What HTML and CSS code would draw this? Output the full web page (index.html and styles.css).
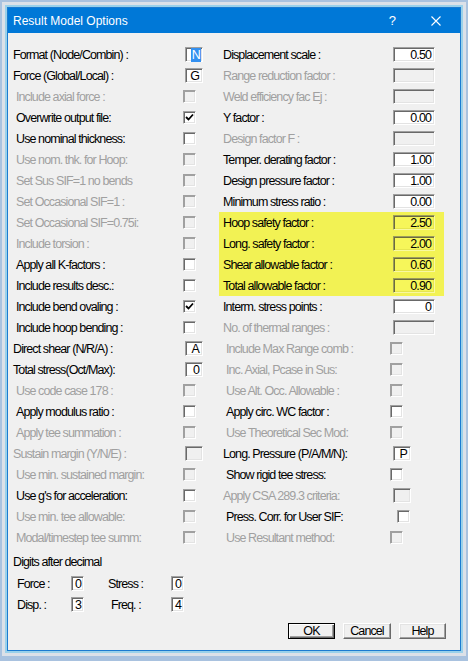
FILE: index.html
```html
<!DOCTYPE html>
<html lang="en">
<head>
    <meta charset="UTF-8">
    <meta name="viewport" content="width=device-width, initial-scale=1.0">
    <title>Result Model Options</title>
    <link rel="stylesheet" href="styles.css">
</head>
<body>
<div class="frame"><div class="frame2"><div class="frame3">
<div class="window">
    <div class="titlebar">
        <span class="title">Result Model Options</span>
        <span class="qmark">?</span>
        <svg class="close" width="10" height="10" viewBox="0 0 10 10"><path d="M0.5 0.5 L9.5 9.5 M9.5 0.5 L0.5 9.5" stroke="#fff" stroke-width="1.1" fill="none"/></svg>
    </div>

    <div class="client">
        <div class="cols">
            <!-- left column -->
            <div class="col left">
                <div class="row"><span class="lab">Format (Node/Combin) :</span><span class="tb ch"><span class="sel">N</span></span></div>
                <div class="row"><span class="lab">Force (Global/Local) :</span><span class="tb ch">G</span></div>
                <div class="row"><span class="lab i off">Include axial force :</span><span class="cb off"></span></div>
                <div class="row"><span class="lab i">Overwrite output file:</span><span class="cb"><svg width="9" height="9" viewBox="0 0 9 9"><path d="M1 4 L3.5 6.5 L8 1.5" stroke="#000" stroke-width="1.8" fill="none"/></svg></span></div>
                <div class="row"><span class="lab i">Use nominal thickness:</span><span class="cb"></span></div>
                <div class="row"><span class="lab i off">Use nom. thk. for Hoop:</span><span class="cb off"></span></div>
                <div class="row"><span class="lab i off">Set Sus SIF=1 no bends</span><span class="cb off"></span></div>
                <div class="row"><span class="lab i off">Set Occasional SIF=1 :</span><span class="cb off"></span></div>
                <div class="row"><span class="lab i off">Set Occasional SIF=0.75i:</span><span class="cb off"></span></div>
                <div class="row"><span class="lab i off">Include torsion :</span><span class="cb off"></span></div>
                <div class="row"><span class="lab i">Apply all K-factors :</span><span class="cb"></span></div>
                <div class="row"><span class="lab i">Include results desc.:</span><span class="cb"></span></div>
                <div class="row"><span class="lab i">Include bend ovaling :</span><span class="cb"><svg width="9" height="9" viewBox="0 0 9 9"><path d="M1 4 L3.5 6.5 L8 1.5" stroke="#000" stroke-width="1.8" fill="none"/></svg></span></div>
                <div class="row"><span class="lab i">Include hoop bending :</span><span class="cb"></span></div>
                <div class="row"><span class="lab">Direct shear (N/R/A) :</span><span class="tb ch">A</span></div>
                <div class="row"><span class="lab">Total stress(Oct/Max):</span><span class="tb ch">0</span></div>
                <div class="row"><span class="lab i off">Use code case 178 :</span><span class="cb off"></span></div>
                <div class="row"><span class="lab i">Apply modulus ratio :</span><span class="cb"></span></div>
                <div class="row"><span class="lab i off">Apply tee summation :</span><span class="cb off"></span></div>
                <div class="row"><span class="lab off">Sustain margin (Y/N/E) :</span><span class="tb ch off"></span></div>
                <div class="row"><span class="lab i off">Use min. sustained margin:</span><span class="cb off"></span></div>
                <div class="row"><span class="lab i">Use g's for acceleration:</span><span class="cb"></span></div>
                <div class="row"><span class="lab i off">Use min. tee allowable:</span><span class="cb off"></span></div>
                <div class="row"><span class="lab i off">Modal/timestep tee summ:</span><span class="cb off"></span></div>
            </div>

            <!-- right column -->
            <div class="col right">
                <div class="row"><span class="lab">Displacement scale :</span><span class="tb num">0.50</span></div>
                <div class="row"><span class="lab off">Range reduction factor :</span><span class="tb num off"></span></div>
                <div class="row"><span class="lab off">Weld efficiency fac Ej :</span><span class="tb num off"></span></div>
                <div class="row"><span class="lab">Y factor :</span><span class="tb num">0.00</span></div>
                <div class="row"><span class="lab off">Design factor F :</span><span class="tb num off"></span></div>
                <div class="row"><span class="lab">Temper. derating factor :</span><span class="tb num">1.00</span></div>
                <div class="row"><span class="lab">Design pressure factor :</span><span class="tb num">1.00</span></div>
                <div class="row"><span class="lab">Minimum stress ratio :</span><span class="tb num">0.00</span></div>
                <div class="hl">
                    <div class="row"><span class="lab">Hoop safety factor :</span><span class="tb num yel">2.50</span></div>
                    <div class="row"><span class="lab">Long. safety factor :</span><span class="tb num yel">2.00</span></div>
                    <div class="row"><span class="lab">Shear allowable factor :</span><span class="tb num yel">0.60</span></div>
                    <div class="row"><span class="lab">Total allowable factor :</span><span class="tb num yel">0.90</span></div>
                </div>
                <div class="row"><span class="lab">Interm. stress points :</span><span class="tb num">0</span></div>
                <div class="row"><span class="lab off">No. of thermal ranges :</span><span class="tb num off"></span></div>
                <div class="row"><span class="lab i off">Include Max Range comb :</span><span class="cb off"></span></div>
                <div class="row"><span class="lab i off">Inc. Axial, Pcase in Sus:</span><span class="cb off"></span></div>
                <div class="row"><span class="lab i off">Use Alt. Occ. Allowable :</span><span class="cb off"></span></div>
                <div class="row"><span class="lab i">Apply circ. WC factor :</span><span class="cb"></span></div>
                <div class="row"><span class="lab i off">Use Theoretical Sec Mod:</span><span class="cb off"></span></div>
                <div class="row"><span class="lab">Long. Pressure (P/A/M/N):</span><span class="tb ch2">P</span></div>
                <div class="row"><span class="lab i">Show rigid tee stress:</span><span class="cb"></span></div>
                <div class="row"><span class="lab off">Apply CSA 289.3 criteria:</span><span class="tb ch2 off"></span></div>
                <div class="row"><span class="lab i">Press. Corr. for User SIF:</span><span class="cb far"></span></div>
                <div class="row"><span class="lab i off">Use Resultant method:</span><span class="cb off"></span></div>
            </div>
        </div>

        <div class="digits">
            <div class="dhead">Digits after decimal</div>
            <div class="drow">
                <span class="dlab">Force :</span><span class="tb dg">0</span>
                <span class="dlab2">Stress :</span><span class="tb dg">0</span>
            </div>
            <div class="drow">
                <span class="dlab">Disp. :</span><span class="tb dg">3</span>
                <span class="dlab2 i">Freq. :</span><span class="tb dg">4</span>
            </div>
        </div>

        <div class="buttons">
            <button class="btn def">OK</button>
            <button class="btn wide">Cancel</button>
            <button class="btn">Help</button>
        </div>
    </div>
</div>
</div></div></div>
</body>
</html>
```

FILE: styles.css
```css
html, body {
    margin: 0;
    padding: 0;
}
body {
    width: 468px;
    height: 661px;
    background: #a9c2df;
    font-family: "Liberation Sans", Arial, sans-serif;
    font-size: 12.5px;
    letter-spacing: -0.9px;
    color: #000;
    overflow: hidden;
}

/* window frame */
.frame { padding: 2px; background: #a9c2df; }
.frame2 { padding: 3px; background: #dce1e8; }
.frame3 { padding: 2px; background: #9ad1ea; }
.window {
    border: 1px solid #1c7bd0;
    background: #f0f0f0;
}
.titlebar {
    height: 25px;
    background: #0078d7;
    color: #fff;
    display: flex;
    align-items: center;
    font-size: 12px;
    letter-spacing: 0;
}
.title { padding-left: 5px; flex: 1; }
.qmark { font-size: 13px; margin-right: 35px; }
.close { margin-right: 19px; }

.client {
    height: 617px;
    padding-top: 11px;
    box-sizing: border-box;
}
.cols { display: flex; }
.col.left { width: 211px; }
.col.right { width: 241px; }

.row {
    height: 21px;
    display: flex;
    align-items: center;
}
.left .row { padding-left: 5px; }
.right .row { padding-left: 4px; }
.lab {
    width: 170px;
    flex: none;
    white-space: nowrap;
    box-sizing: border-box;
}
.lab.i { padding-left: 3px; }
.lab.off { color: #a0a0a0; }

.hl {
    width: 225px;
    background: #f2f254;
}

/* sunken edit box */
.tb {
    box-sizing: border-box;
    height: 15px;
    border: 1px solid;
    border-color: #a0a0a0 #fff #fff #a0a0a0;
    box-shadow: inset 1px 1px #696969, inset -1px -1px #e3e3e3;
    background: #fff;
    text-align: right;
    padding: 0 3px 0 2px;
    line-height: 14px;
}
.tb.off { background: #f0f0f0; }
.tb.ch { width: 18px; margin-left: 2px; }
.tb.ch2 { width: 18px; }
.tb.num { width: 42px; }
.tb.yel {
    background: #f6f65a;
    border-color: #9c9c5c #f9f9a0 #f9f9a0 #9c9c5c;
    box-shadow: inset 1px 1px #6c6c3c, inset -1px -1px #e6e650;
}
.sel {
    background: #3390f0;
    color: #fff;
    display: inline-block;
    padding: 0 1px;
    margin-right: -2px;
}

/* checkbox */
.cb {
    box-sizing: border-box;
    width: 13px;
    height: 13px;
    border: 1px solid;
    border-color: #a0a0a0 #fff #fff #a0a0a0;
    box-shadow: inset 1px 1px #696969, inset -1px -1px #e3e3e3;
    background: #fff;
    display: flex;
    align-items: center;
    justify-content: center;
}
.cb.off {
    background: #f0f0f0;
    box-shadow: inset 1px 1px #a0a0a0, inset -1px -1px #e3e3e3;
}
.right .cb { margin-left: -3px; }
.right .cb.far { margin-left: 4px; }

/* digits after decimal */
.digits { margin-top: 4px; }
.dhead {
    height: 21px;
    line-height: 21px;
    padding-left: 5px;
}
.drow {
    height: 21px;
    display: flex;
    align-items: center;
    padding-left: 9px;
}
.dlab { width: 54px; }
.dlab2 { width: 63px; margin-left: 24px; }
.dlab2.i { padding-left: 3px; box-sizing: border-box; }
.tb.dg { width: 13px; padding: 0 2px 0 1px; }

/* buttons */
.buttons {
    display: flex;
    justify-content: flex-end;
    gap: 8px;
    padding-right: 14px;
    margin-top: 8px;
}
.btn {
    width: 47px;
    height: 16px;
    padding: 0;
    font-family: inherit;
    font-size: 12.5px;
    letter-spacing: -0.9px;
    color: #000;
    background: #f0f0f0;
    border: 1px solid;
    border-color: #fff #696969 #696969 #fff;
    box-shadow: inset -1px -1px #a0a0a0, inset 1px 1px #e3e3e3;
    line-height: 12px;
}
.btn.wide { width: 48px; }
.btn.def {
    border-color: #000;
    box-shadow: inset 1px 1px #fff, inset -1px -1px #696969, inset -2px -2px #a0a0a0;
}
```
